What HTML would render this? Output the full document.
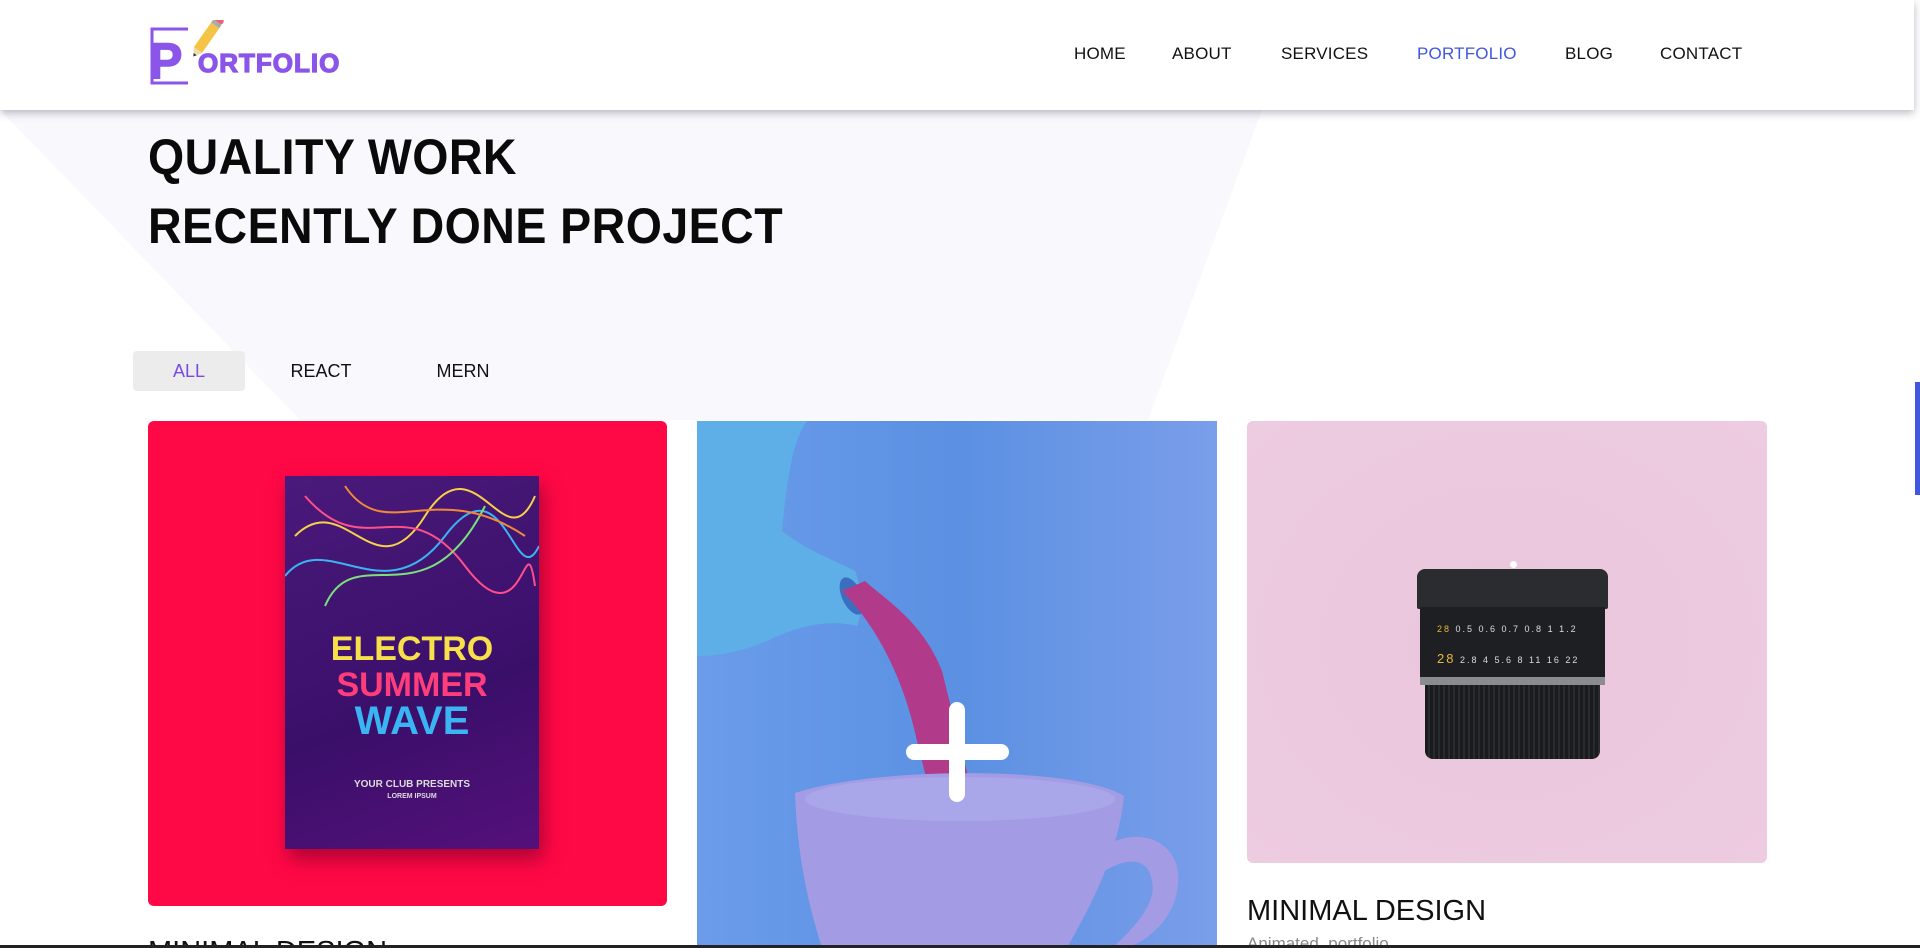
<!DOCTYPE html>
<html><head><meta charset="utf-8"><style>
*{margin:0;padding:0;box-sizing:border-box}
html,body{width:1920px;height:948px;overflow:hidden;background:#fff;font-family:"Liberation Sans",sans-serif;position:relative}
.bgshape{position:absolute;left:0;top:0;width:1914px;height:948px;background:#f9f8fc;clip-path:polygon(0 110px,1262px 110px,1148px 420px,300px 420px)}
header{position:absolute;left:0;top:0;width:1914px;height:110px;background:#fff;box-shadow:0 3px 8px rgba(60,60,90,.35);z-index:5}
nav a{position:absolute;top:44px;font-size:17px;color:#111;text-decoration:none;letter-spacing:.2px}
h1{position:absolute;left:148px;font-size:50px;font-weight:bold;color:#0a0a0a;white-space:nowrap;transform-origin:left center;transform:scaleX(.93);letter-spacing:.5px}
.flt{position:absolute;top:351px;height:40px;line-height:40px;font-size:18px;text-align:center;color:#111}
.card{position:absolute;border-radius:6px;overflow:hidden}
.title{position:absolute;font-size:29px;color:#111;white-space:nowrap}
</style></head><body>
<div class="bgshape"></div>
<header>
<svg style="position:absolute;left:148px;top:20px" width="220" height="70" viewBox="0 0 220 70">
<path d="M40 9 H4 V63 H40" fill="none" stroke="#8a55e8" stroke-width="3"/>
<text x="1" y="58" font-family="Liberation Sans" font-weight="bold" font-size="50" fill="#8a55e8" stroke="#8a55e8" stroke-width="1.5">P</text>
<g transform="translate(50,30) rotate(-55)"><rect x="0" y="-5" width="30" height="10" fill="#f6c445"/><polygon points="0,-5 0,5 -8,0" fill="#f1d9a8"/><polygon points="-5,-2 -5,2 -8,0" fill="#333"/><rect x="30" y="-5" width="4" height="10" fill="#aaa"/><rect x="34" y="-5" width="5" height="10" rx="2" fill="#e8637a"/></g>
<text x="50" y="52" font-family="Liberation Sans" font-weight="bold" font-size="26" fill="#8a55e8" stroke="#8a55e8" stroke-width="1.3" letter-spacing="1">ORTFOLIO</text>
</svg>
<nav>
<a style="left:1074px">HOME</a><a style="left:1172px">ABOUT</a><a style="left:1281px">SERVICES</a><a style="left:1417px;color:#4157dd">PORTFOLIO</a><a style="left:1565px">BLOG</a><a style="left:1660px">CONTACT</a>
</nav>
</header>
<div style="position:absolute;right:0;top:0;width:6px;height:948px;background:#fff"></div>
<div style="position:absolute;right:0;top:382px;width:5px;height:113px;background:#4157dd"></div>
<h1 style="top:128px">QUALITY WORK</h1>
<h1 style="top:197px">RECENTLY DONE PROJECT</h1>
<div class="flt" style="left:133px;width:112px;background:#ececec;border-radius:4px;color:#7b4ae0">ALL</div>
<div class="flt" style="left:281px;width:80px">REACT</div>
<div class="flt" style="left:423px;width:80px">MERN</div>

<div class="card" style="left:148px;top:421px;width:519px;height:485px;background:#ff0846">
<div style="position:absolute;left:137px;top:55px;width:254px;height:373px;background:linear-gradient(160deg,#4a1a7a,#3a0f6a 60%,#55107a);box-shadow:4px 10px 18px rgba(120,0,40,.6)">
<svg width="254" height="160" viewBox="0 0 254 160" style="position:absolute;left:0;top:0"><g fill="none" stroke-width="2"><path d="M10 60 C60 10 90 120 140 40 S220 90 250 20" stroke="#f7d14a"/><path d="M0 100 C40 50 100 140 160 60 S230 120 254 70" stroke="#3ab4f2"/><path d="M20 20 C80 90 120 10 180 90 S240 40 250 110" stroke="#ff4f8a"/><path d="M40 130 C70 60 140 150 200 30" stroke="#7be07b"/><path d="M60 10 C100 70 150 0 240 60" stroke="#f08a3a"/></g></svg>
<div style="position:absolute;left:0;width:100%;top:155px;text-align:center;font-weight:bold;font-size:34px;line-height:36px"><div style="color:#f7e04a">ELECTRO</div><div style="color:#ff3d7a">SUMMER</div><div style="color:#3ab4f2;font-size:40px">WAVE</div></div>
<div style="position:absolute;left:0;width:100%;top:303px;text-align:center;color:#ddd;font-size:10px;font-weight:bold">YOUR CLUB PRESENTS<br><span style="font-size:7px">LOREM IPSUM</span></div>
</div>
</div>
<div class="title" style="left:148px;top:936px">MINIMAL DESIGN</div>

<div class="card" style="left:697px;top:421px;width:520px;height:527px;border-radius:0;background:linear-gradient(90deg,#6a9cea,#5b90e2 50%,#7a9eea)">
<svg width="520" height="527" viewBox="0 0 520 527" style="position:absolute;left:0;top:0">
<path d="M0 0 H110 C95 20 90 60 85 110 C110 130 140 140 158 150 C165 165 165 195 160 205 C140 200 110 200 70 220 C40 232 20 235 0 235 Z" fill="#5eaee8"/>
<ellipse cx="155" cy="175" rx="10" ry="20" fill="#3a6fc0" transform="rotate(-25 155 175)"/>
<path d="M145 170 C175 200 205 250 220 320 L240 400 L283 404 L245 250 C225 200 190 180 168 160 Z" fill="#b23a8a"/>
<path d="M98 372 C180 345 380 345 427 375 C420 440 390 490 370 527 H125 C110 480 100 430 98 372 Z" fill="#a39ce4"/>
<ellipse cx="263" cy="378" rx="155" ry="22" fill="#aaa6ea"/>
<path d="M400 430 C440 400 490 420 480 470 C475 500 450 520 430 527 H415 C440 505 460 480 455 460 C450 430 420 440 400 455 Z" fill="#a39ce4"/>
<rect x="209" y="323" width="103" height="16" rx="8" fill="#fff"/>
<rect x="252" y="281" width="16" height="100" rx="8" fill="#fff"/>
</svg>
</div>

<div class="card" style="left:1247px;top:421px;width:520px;height:442px;background:radial-gradient(ellipse at 50% 50%,#eac6dd,#edcbe0)">
<div style="position:absolute;left:170px;top:148px;width:191px;height:190px">
<div style="position:absolute;left:0;top:0;width:191px;height:40px;background:#2a2c30;border-radius:8px 8px 2px 2px"></div>
<div style="position:absolute;left:3px;top:38px;width:185px;height:70px;background:#1d1f22"></div>
<div style="position:absolute;left:3px;top:108px;width:185px;height:8px;background:#8a8c90"></div>
<div style="position:absolute;left:8px;top:116px;width:175px;height:74px;background:repeating-linear-gradient(90deg,#1a1b1d 0 3px,#2a2b2e 3px 5px);border-radius:0 0 8px 8px"></div>
<div style="position:absolute;left:20px;top:55px;font-size:9px;color:#ddd;white-space:nowrap;letter-spacing:2px"><span style="color:#e5b93a">28</span> 0.5 0.6 0.7 0.8 1 1.2</div>
<div style="position:absolute;left:20px;top:82px;font-size:9px;color:#ddd;white-space:nowrap;letter-spacing:2px"><span style="color:#e5b93a;font-size:13px">28</span> 2.8 4 5.6 8 11 16 22</div>
<div style="position:absolute;left:93px;top:-8px;width:7px;height:7px;border-radius:50%;background:#fff"></div>
</div>
</div>
<div class="title" style="left:1247px;top:895px">MINIMAL DESIGN</div>
<div style="position:absolute;left:1247px;top:934px;font-size:17px;color:#888">Animated_portfolio</div>
<div style="position:absolute;left:0;top:945px;width:1920px;height:3px;background:#222"></div>
</body></html>
